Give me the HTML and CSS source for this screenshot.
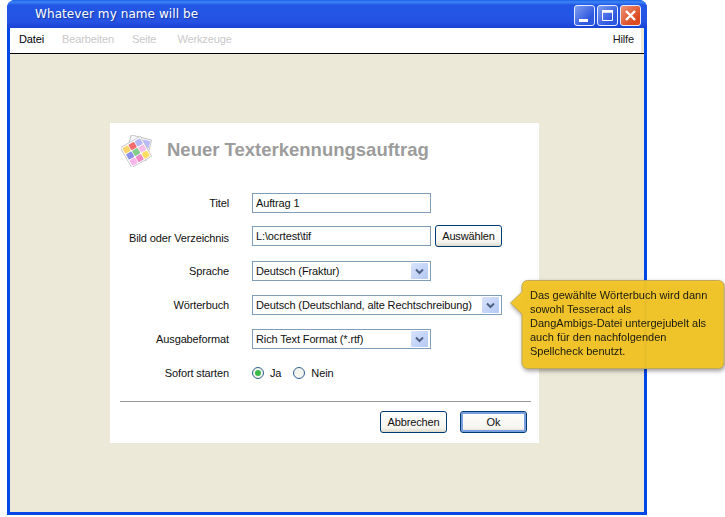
FILE: index.html
```html
<!DOCTYPE html>
<html lang="de">
<head>
<meta charset="utf-8">
<title>Whatever my name will be</title>
<link rel="stylesheet" href="styles.css">
</head>
<body>
<div class="window">
  <header class="titlebar">
    <span class="title">Whatever my name will be</span>
    <div class="win-buttons">
      <span class="win-btn"><svg viewBox="0 0 21 21" width="21" height="21"><rect x="5" y="14" width="9" height="3" fill="#fff"/></svg></span>
      <span class="win-btn"><svg viewBox="0 0 21 21" width="21" height="21"><path d="M5.500 7v8.500h10V7z" fill="none" stroke="#fff" stroke-width="1"/><rect x="5" y="5" width="11" height="2.500" fill="#fff"/></svg></span>
      <span class="win-btn win-close"><svg viewBox="0 0 21 21" width="21" height="21"><path d="M6 6l9 9M15 6l-9 9" stroke="#fff" stroke-width="2.400" fill="none"/></svg></span>
    </div>
  </header>
  <nav class="menubar">
    <span class="menu-item">Datei</span>
    <span class="menu-item off">Bearbeiten</span>
    <span class="menu-item off menu-page">Seite</span>
    <span class="menu-item off">Werkzeuge</span>
    <span class="menu-item help">Hilfe</span>
  </nav>
  <main class="content">
    <section class="card">
      <div class="card-head">
        <svg class="logo" viewBox="0 0 32 32" width="32" height="32">
          <g transform="rotate(14 17 14)">
            <rect x="7" y="2" width="21" height="21" fill="#fbf8fb" stroke="#bbb" stroke-width=".8"/>
            <rect x="20" y="3.500" width="7" height="7" fill="#b9b9f7"/>
            <rect x="20" y="11" width="7" height="7" fill="#f7a6d8"/>
          </g>
          <g transform="rotate(-30 15 17)">
            <rect x="3.500" y="5.500" width="23" height="23" fill="#fff" stroke="#c4c4c4" stroke-width=".8"/>
            <rect x="5" y="7" width="6.300" height="6.300" rx="1" fill="#ffd36b"/>
            <rect x="12" y="7" width="6.300" height="6.300" rx="1" fill="#f26c70"/>
            <rect x="19" y="7" width="6.300" height="6.300" rx="1" fill="#b6b8f6"/>
            <rect x="5" y="14" width="6.300" height="6.300" rx="1" fill="#8e92e6"/>
            <rect x="12" y="14" width="6.300" height="6.300" rx="1" fill="#86cc8c"/>
            <rect x="19" y="14" width="6.300" height="6.300" rx="1" fill="#f8bfe6"/>
            <rect x="5" y="21" width="6.300" height="6.300" rx="1" fill="#f9b4ea"/>
            <rect x="12" y="21" width="6.300" height="6.300" rx="1" fill="#f28cc4"/>
            <rect x="19" y="21" width="6.300" height="6.300" rx="1" fill="#ffdc62"/>
          </g>
        </svg>
        <h1 class="heading">Neuer Texterkennungsauftrag</h1>
      </div>
      <div class="form">
        <div class="row row-title">
          <span class="label">Titel</span>
          <div class="field">Auftrag 1</div>
        </div>
        <div class="row row-path">
          <span class="label">Bild oder Verzeichnis</span>
          <div class="field">L:\ocrtest\tif</div>
          <span class="btn btn-pick">Auswählen</span>
        </div>
        <div class="row">
          <span class="label">Sprache</span>
          <div class="field select"><span>Deutsch (Fraktur)</span><span class="arrow"><svg viewBox="0 0 17 17" width="17" height="17"><path d="M5 6.500l3.500 3.500 3.500-3.500" fill="none" stroke="#4d6185" stroke-width="2"/></svg></span></div>
        </div>
        <div class="row">
          <span class="label">Wörterbuch</span>
          <div class="field select wide"><span>Deutsch (Deutschland, alte Rechtschreibung)</span><span class="arrow"><svg viewBox="0 0 17 17" width="17" height="17"><path d="M5 6.500l3.500 3.500 3.500-3.500" fill="none" stroke="#4d6185" stroke-width="2"/></svg></span></div>
        </div>
        <div class="row">
          <span class="label">Ausgabeformat</span>
          <div class="field select"><span>Rich Text Format (*.rtf)</span><span class="arrow"><svg viewBox="0 0 17 17" width="17" height="17"><path d="M5 6.500l3.500 3.500 3.500-3.500" fill="none" stroke="#4d6185" stroke-width="2"/></svg></span></div>
        </div>
        <div class="row">
          <span class="label">Sofort starten</span>
          <div class="radios">
            <span class="radio on"></span><span class="radio-text">Ja</span>
            <span class="radio"></span><span class="radio-text">Nein</span>
          </div>
        </div>
      </div>
      <div class="divider"></div>
      <div class="actions">
        <span class="btn">Abbrechen</span>
        <span class="btn btn-default">Ok</span>
      </div>
    </section>
  </main>
</div>
<aside class="tooltip">
  <svg class="tooltip-shape" viewBox="0 0 216 90" width="216" height="90">
    <path d="M17.500 .5H208.500a5.500 5.500 0 0 1 5.500 5.500V83a5.500 5.500 0 0 1-5.500 5.500H17.500a5.500 5.500 0 0 1-5.500-5.500V34L.5 23 12 12V6a5.500 5.500 0 0 1 5.500-5.500z" fill="#f3c525" fill-opacity=".96" stroke="#c0a858" stroke-width="1"/>
  </svg>
  <p class="tooltip-text">Das gewählte Wörterbuch wird dann<br>sowohl Tesseract als<br>DangAmbigs-Datei untergejubelt als<br>auch für den nachfolgenden<br>Spellcheck benutzt.</p>
</aside>
</body>
</html>
```
FILE: styles.css
```css
* { box-sizing: border-box; }
html, body { margin: 0; padding: 0; }
body {
  width: 725px;
  height: 517px;
  background: #fff;
  overflow: hidden;
  position: relative;
  font-family: "Liberation Sans", Arial, sans-serif;
  font-size: 11px;
  letter-spacing: -.13px;
  color: #111;
}
.window {
  margin-left: 7px;
  width: 640px;
  height: 515px;
  display: flex;
  flex-direction: column;
  background: #0049e6;
  border-radius: 8px 8px 0 0;
}
.titlebar {
  height: 28px;
  flex: none;
  display: flex;
  align-items: center;
  justify-content: space-between;
  padding: 0 6px 0 28px;
  border-radius: 8px 8px 0 0;
  background: linear-gradient(#1a5fe8 0, #3d86f5 2px, #2257e6 5px, #2552e2 22px, #1c46d8 26px, #1a44d2 100%);
}
.title {
  font-family: "DejaVu Sans", sans-serif;
  font-size: 12px;
  letter-spacing: .08px;
  color: #fff;
  text-shadow: 1px 1px 1px #1838a0;
}
.win-buttons { display: flex; gap: 2px; margin-top: 3px; }
.win-btn {
  width: 21px;
  height: 21px;
  border: 1px solid #e6ecff;
  border-radius: 3px;
  background: linear-gradient(135deg, #7f9df0, #2f58e0 70%);
  display: block;
  overflow: hidden;
}
.win-btn svg { display: block; margin: -1px; }
.win-close { background: linear-gradient(135deg, #ec9276, #dc4a20 75%); }
.menubar {
  height: 26px;
  flex: none;
  display: flex;
  align-items: center;
  margin: 0 3px;
  padding: 0 10px 4px 9px;
  background: linear-gradient(to right, #fff 631px, #ece9d8 631px);
  border-bottom: 1px solid #000;
}
.menu-item { margin-right: 18px; color: #000; }
.menu-item.off { color: #c9c9c9; }
.menu-item.menu-page { margin-right: 21px; }
.menu-item.help { margin: 0 0 0 auto; color: #1a1a1a; }
.content {
  flex: 1;
  margin: 0 3px 3px;
  background: #ece9d9;
  padding: 69px 0 0 100px;
}
.card {
  width: 429px;
  height: 320px;
  background: #fff;
  display: flex;
  flex-direction: column;
  padding: 0 8px 0 10px;
}
.card-head {
  height: 54px;
  margin-bottom: 16px;
  flex: none;
  display: flex;
  align-items: center;
}
.logo { margin: 1px 14px 0 1px; flex: none; }
.heading {
  margin: 0;
  font-family: "Liberation Sans", Arial, sans-serif;
  font-size: 18.5px;
  font-weight: bold;
  letter-spacing: 0;
  color: #9c9c9c;
}
.form { display: flex; flex-direction: column; gap: 14px; }
.row { display: flex; align-items: center; height: 20px; }
.row-title { margin-bottom: -1px; }
.row-path { margin-bottom: 1px; }
.row-path .label { padding-top: 3px; }
.label { width: 109px; text-align: right; margin-right: 23px; flex: none; white-space: nowrap; }
.field {
  width: 179px;
  height: 20px;
  border: 1px solid #7f9db9;
  background: #fff;
  padding: 0 3px;
  display: flex;
  align-items: center;
  justify-content: space-between;
  color: #111;
  white-space: nowrap;
}
.field.wide { width: 250px; }
.arrow {
  width: 17px;
  height: 16px;
  background: linear-gradient(135deg, #d9e3fb, #b4c8f4);
  border-radius: 1px;
  margin-right: -1px;
  display: block;
  overflow: hidden;
}
.arrow svg { display: block; }
.btn {
  width: 67px;
  height: 22px;
  border: 1px solid #003c74;
  border-radius: 3px;
  background: linear-gradient(#fff, #f5f4ee 80%, #dcd8cc);
  display: flex;
  align-items: center;
  justify-content: center;
  color: #111;
}
.btn-pick { margin-left: 4px; }
.btn-default { box-shadow: inset 0 0 0 2px #7a9fe0; }
.radios { display: flex; align-items: center; }
.radio {
  width: 12px;
  height: 12px;
  border: 1px solid #2f5f90;
  border-radius: 50%;
  background: #f4f4ee;
  margin-right: 6px;
  position: relative;
}
.radio.on::after {
  content: "";
  position: absolute;
  inset: 2px;
  border-radius: 50%;
  background: #3cb84a;
}
.radio-text { margin-right: 12px; }
.divider {
  height: 1px;
  background: #999;
  margin: 18px 0 0 0;
  flex: none;
}
.actions {
  display: flex;
  justify-content: flex-end;
  gap: 13px;
  margin-top: 9px;
  padding-right: 4px;
}
.tooltip {
  position: absolute;
  left: 510px;
  top: 280px;
  width: 216px;
  height: 90px;
  filter: drop-shadow(1px 2px 2px rgba(0,0,0,.4));
}
.tooltip-shape { position: absolute; left: 0; top: 0; }
.tooltip-text {
  position: absolute;
  left: 20px;
  top: 8px;
  width: 192px;
  margin: 0;
  font-family: "Liberation Sans", Arial, sans-serif;
  font-size: 11px;
  letter-spacing: 0;
  line-height: 14px;
  color: #1a1a10;
}
```
